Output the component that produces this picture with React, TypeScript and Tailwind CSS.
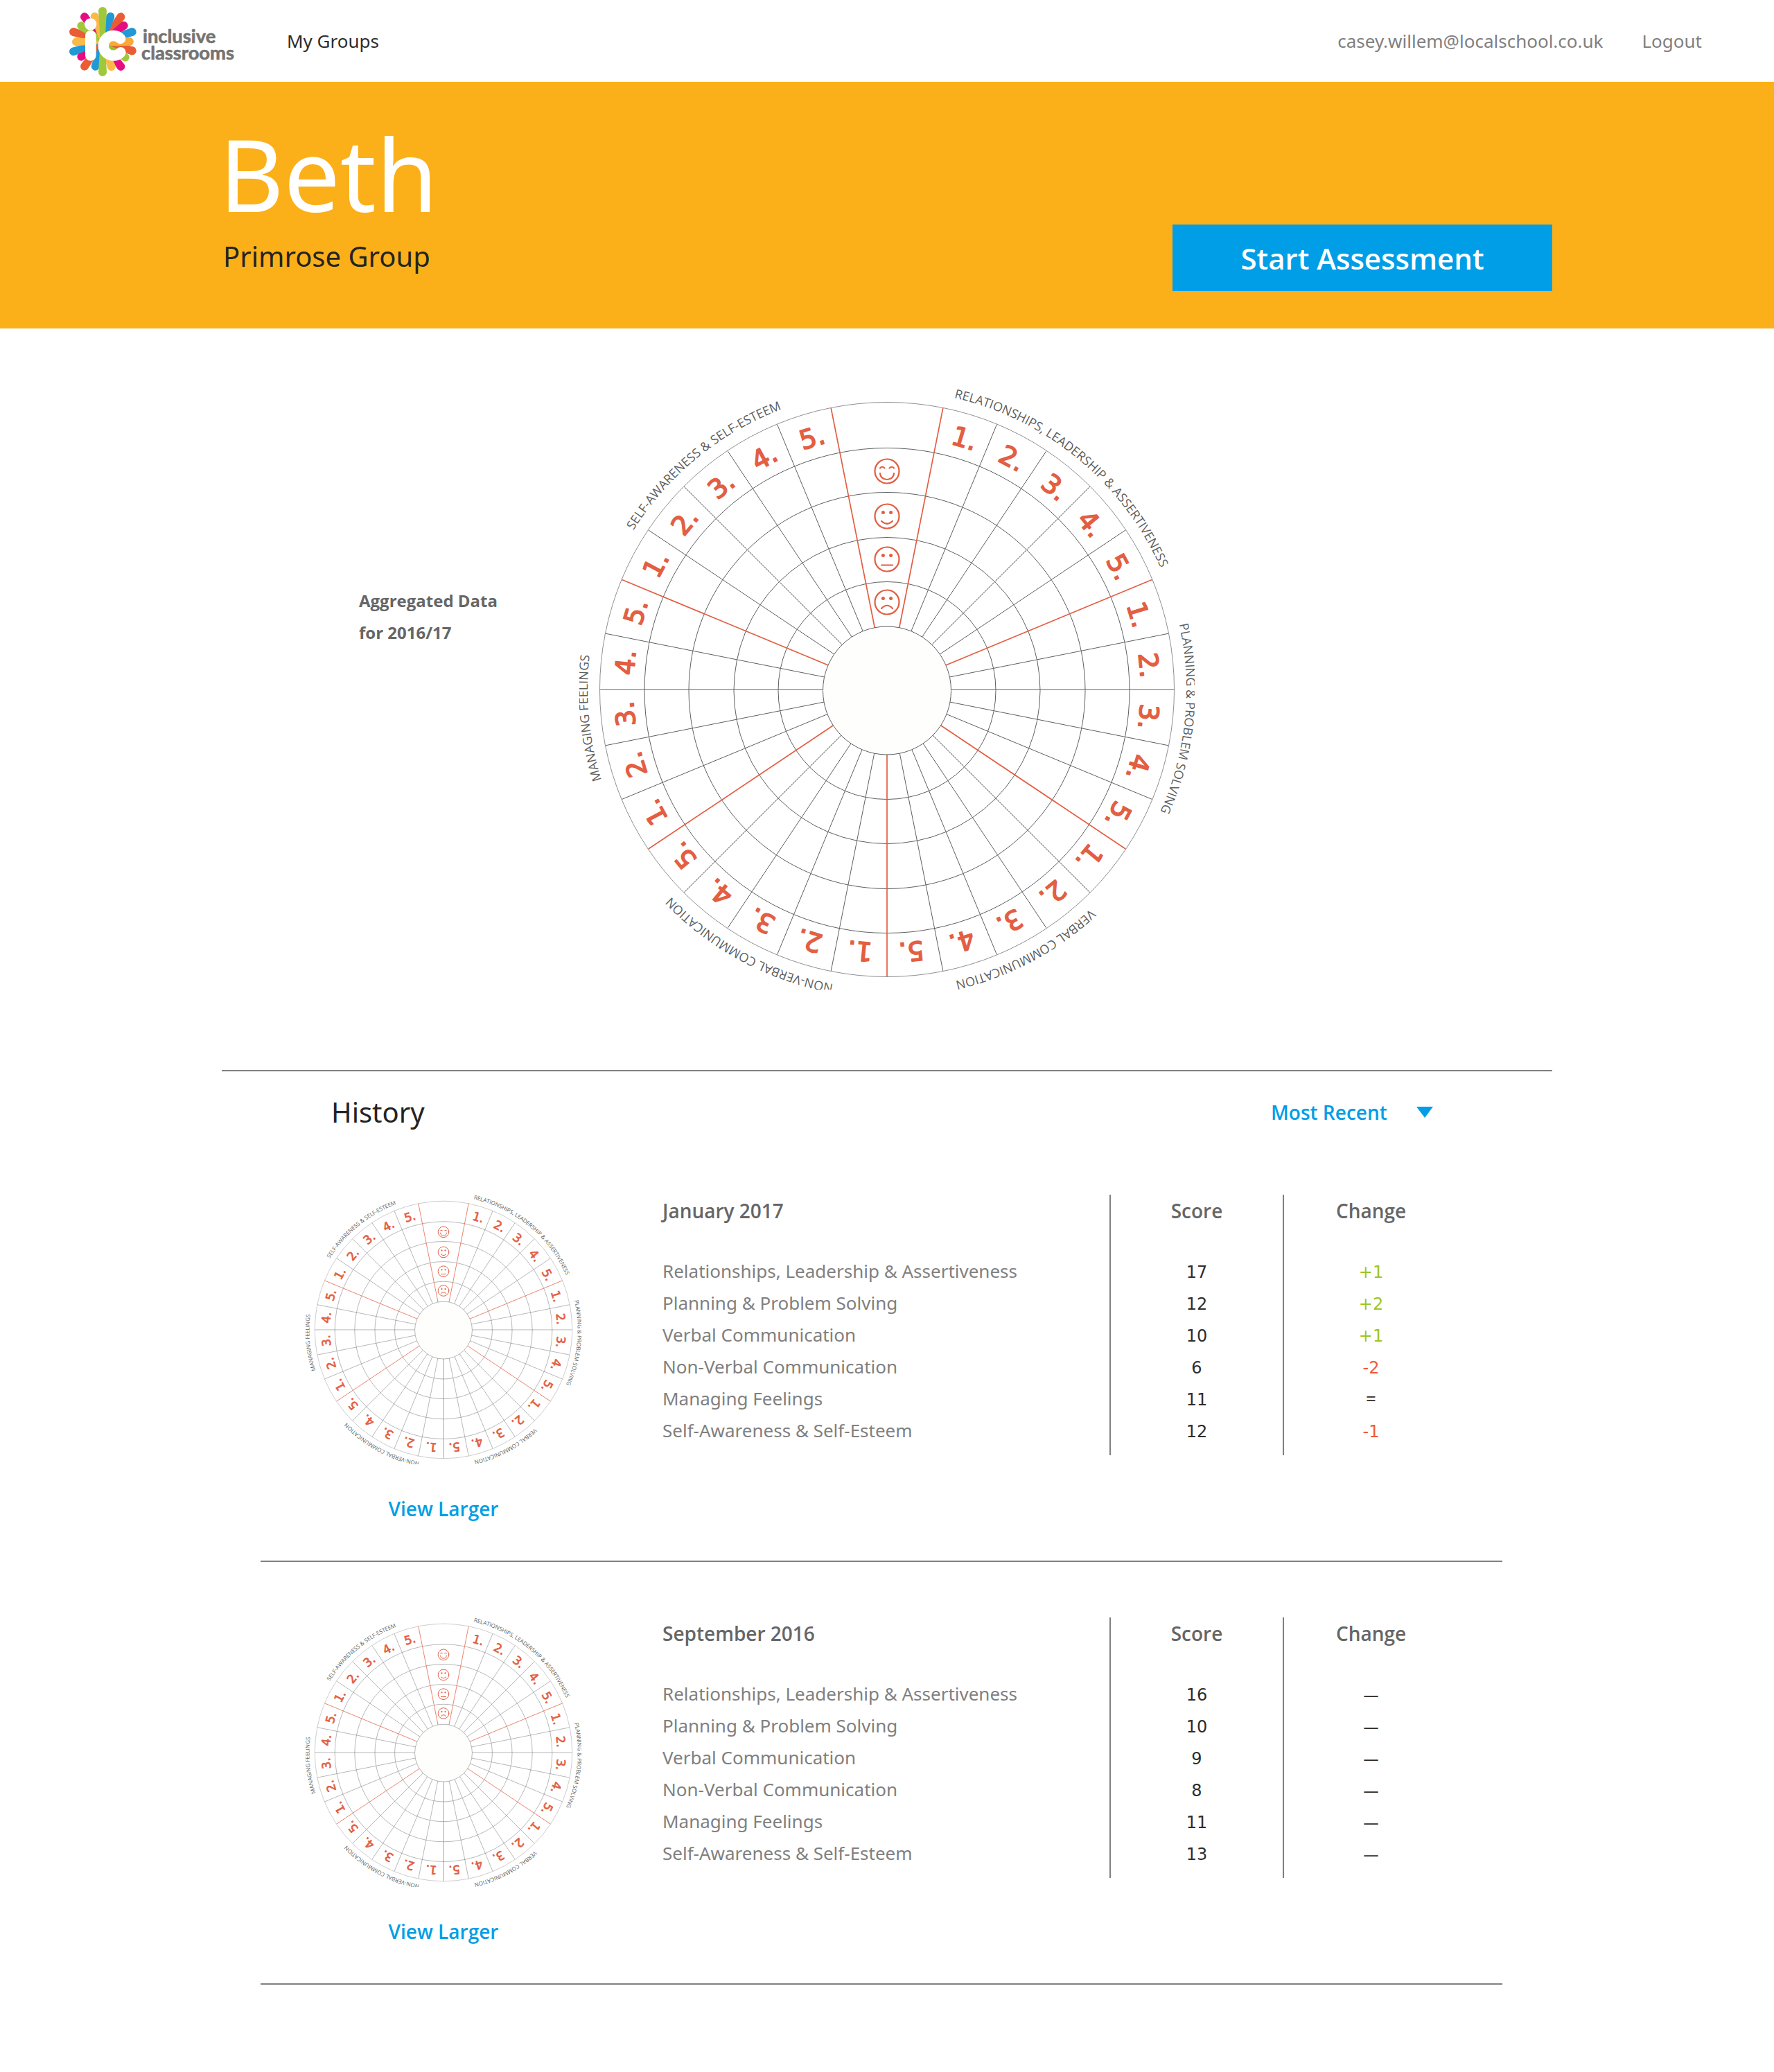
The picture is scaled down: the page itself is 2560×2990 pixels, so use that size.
import React from 'react';

const SKILLS = [
  'Relationships, Leadership & Assertiveness',
  'Planning & Problem Solving',
  'Verbal Communication',
  'Non-Verbal Communication',
  'Managing Feelings',
  'Self-Awareness & Self-Esteem',
];

const HISTORY = [
  {
    date: 'January 2017',
    scores: [17, 12, 10, 6, 11, 12],
    changes: ['+1', '+2', '+1', '-2', '=', '-1'],
  },
  {
    date: 'September 2016',
    scores: [16, 10, 9, 8, 11, 13],
    changes: ['—', '—', '—', '—', '—', '—'],
  },
];

const INK = '#5d5f61';
const RED = '#e35e42';

const polar = (r: number, deg: number) => {
  const a = (deg * Math.PI) / 180;
  return { x: r * Math.sin(a), y: -r * Math.cos(a) };
};

/* Petals of the logo: tip x, tip y, colour. */
const PETALS: [number, number, string][] = [
  [78, 61, '#e60d80'],
  [64, 233, '#e60d80'],
  [254, 236, '#9fc93a'],
  [30, 211, '#2199d6'],
  [30, 126, '#ea5c34'],
  [42, 169, '#fbb94a'],
  [64, 100, '#9fc93a'],
  [122, 60, '#fbb94a'],
  [235, 61, '#ea5c34'],
  [248, 99, '#e60d80'],
  [190, 60, '#2199d6'],
  [284, 126, '#2199d6'],
  [272, 168, '#fbb94a'],
  [284, 208, '#ea5c34'],
  [235, 276, '#e60d80'],
  [194, 276, '#fbb94a'],
  [78, 275, '#ea5c34'],
  [125, 275, '#2199d6'],
  [156, 36, '#9fc93a'],
  [156, 300, '#9fc93a'],
];

function Petal({ x, y, fill }: { x: number; y: number; fill: string }) {
  const cx = 156;
  const cy = 168;
  const len = Math.hypot(x - cx, y - cy);
  const nx = -(y - cy) / len;
  const ny = (x - cx) / len;
  const w = 18;
  const b = 10;
  return (
    <path
      fill={fill}
      d={`M${cx + nx * b} ${cy + ny * b}L${x + nx * w} ${y + ny * w}A${w} ${w} 0 0 0 ${x - nx * w} ${y - ny * w}L${cx - nx * b} ${cy - ny * b}Z`}
    />
  );
}

function Logo() {
  return (
    <svg viewBox="0 0 732 330" className="h-[110px] w-[244px]" role="img" aria-label="inclusive classrooms">
      {PETALS.map(([x, y, c]) => (
        <Petal key={`${x}-${y}`} x={x} y={y} fill={c} />
      ))}
      <circle cx="205" cy="190" r="26" fill="#9dbf2c" />
      <path d="M156 160L272 150A18 18 0 0 1 272 186L182 186Z" fill="#f8a93c" />
      <path d="M190 186L284 190A18 18 0 0 1 280 226Z" fill="#ea5c34" />
      <circle cx="104" cy="93" r="26" fill="#fff" />
      <rect x="81" y="120" width="47" height="131" rx="23" fill="#fff" />
      <path d="M233 155A43 43 0 1 0 234 215" fill="none" stroke="#fff" strokeWidth="46" strokeLinecap="round" />
      <g
        fill="#757472"
        stroke="#757472"
        strokeWidth="2"
        strokeLinejoin="round"
        className="font-['Lato'] text-[82px] font-bold"
      >
        <text x="330" y="174">inclusive</text>
        <text x="324" y="246">classrooms</text>
      </g>
    </svg>
  );
}

function Face({ y, mood }: { y: number; mood: 'joy' | 'happy' | 'neutral' | 'sad' }) {
  const mouth = {
    joy: 'M-10 3A10 9 0 0 0 10 3',
    happy: 'M-8 7Q0 14.500 8 7',
    neutral: 'M-8 8.500H8',
    sad: 'M-8 9Q0 0.500 8 9',
  }[mood];
  return (
    <g transform={`translate(0 ${y})`} fill="none" stroke={RED} strokeWidth="2.200" strokeLinecap="round">
      <circle r="17.500" />
      <path d={mouth} />
      {mood === 'joy' ? (
        <path d="M-10 -4.500Q-7 -8 -3.500 -4.500M3.500 -4.500Q7 -8 10 -4.500" />
      ) : (
        <g fill={RED} stroke="none">
          <circle cx="-5.600" cy="-5.400" r="2.500" />
          <circle cx="5.600" cy="-5.400" r="2.500" />
        </g>
      )}
    </g>
  );
}

function Wheel({ id, className }: { id: string; className: string }) {
  const spokes = Array.from({ length: 31 }, (_, i) => 11.25 * (i + 1));
  const isRed = (i: number) => i % 5 === 0;
  const R = 432;
  return (
    <svg viewBox="0 0 888 868" className={className} role="img" aria-label="Assessment wheel">
      <defs>
        <path id={id} d={`M0 ${-R}A${R} ${R} 0 0 1 0 ${R}A${R} ${R} 0 0 1 0 ${-R}`} />
      </defs>
      <g transform="translate(444 435)">
        <circle r="414.500" fill="none" stroke={INK} strokeWidth="0.700" />
        {[350, 286, 221, 157].map((r) => (
          <circle key={r} cy="1.500" r={r} fill="none" stroke={INK} strokeWidth="1" />
        ))}
        {[false, true].map((red) =>
          spokes.map((deg, i) => {
            if (isRed(i) !== red) return null;
            const a = polar(91, deg);
            const b = polar(414, deg);
            return (
              <line
                key={deg}
                x1={a.x}
                y1={a.y}
                x2={b.x}
                y2={b.y}
                stroke={red ? RED : INK}
                strokeWidth={red ? 1.7 : 1}
              />
            );
          }),
        )}
        <circle cy="1.500" r="92.500" fill="#fefefc" stroke={INK} strokeWidth="1" />
        <g
          fill={RED}
          stroke={RED}
          strokeWidth="1.600"
          strokeLinejoin="round"
          textAnchor="middle"
          className="font-['DejaVu_Sans'] text-[38px]"
        >
          {Array.from({ length: 30 }, (_, i) => (
            <text key={i} transform={`rotate(${11.25 * (i + 1.5)})`} x="2" y="-366">
              {(i % 5) + 1}.
            </text>
          ))}
        </g>
        <Face y={-315} mood="joy" />
        <Face y={-250} mood="happy" />
        <Face y={-188} mood="neutral" />
        <Face y={-126} mood="sad" />
        <g fill={INK} textAnchor="middle" className="font-['Open_Sans'] text-[18px]">
          {SKILLS.map((s, i) => (
            <text key={s}>
              <textPath href={`#${id}`} startOffset={`${((39.5 + 56.25 * i) / 360) * 100}%`}>
                {s.toUpperCase()}
              </textPath>
            </text>
          ))}
        </g>
      </g>
    </svg>
  );
}

function changeColor(change: string) {
  if (change.startsWith('+')) return "font-['DejaVu_Sans'] text-[24px] leading-[42px] text-[#9bc621]";
  if (change.startsWith('-')) return "font-['DejaVu_Sans'] text-[24px] leading-[42px] text-[#ee5a38]";
  if (change === '—') return 'text-[22px] leading-[42px] text-[#2d2d2d]';
  return 'text-[#2d2d2d]';
}

export default function App() {
  return (
    <div className="min-h-screen bg-white font-['Noto_Sans',sans-serif] text-[26px] leading-[46px] text-[#808080]">
      <header className="flex h-[118px] items-center pl-24 pr-[104px]">
        <a href="#home">
          <Logo />
        </a>
        <nav className="ml-[74px] flex-1">
          <a href="#groups" className="text-[#2d2d2d]">
            My Groups
          </a>
        </nav>
        <div className="flex gap-14">
          <a href="#account">casey.willem@localschool.co.uk</a>
          <a href="#logout">Logout</a>
        </div>
      </header>

      <section className="bg-[#fbb01a] pb-[54px] pt-[60px]">
        <div className="mx-auto flex w-3/4 items-end justify-between">
          <div className="pb-[26px] pl-0.5">
            <h1 className="-ml-1.5 text-[144px] leading-[144px] text-white">Beth</h1>
            <p className="mt-6 text-[40px] leading-[48px] text-[#242424]">Primrose Group</p>
          </div>
          <button
            type="button"
            className="h-24 w-[548px] bg-[#009ee6] pt-0.5 font-['Open_Sans',sans-serif] text-[42px] font-semibold text-white"
          >
            Start Assessment
          </button>
        </div>
      </section>

      <main className="mx-auto w-3/4">
        <section className="grid grid-cols-[1fr_auto_1fr] pb-[116px] pt-[86px]">
          <p className="pl-[198px] pt-[284px] font-['Open_Sans',sans-serif] text-[24px] font-bold text-[#666]">
            Aggregated Data
            <br />
            for 2016/17
          </p>
          <Wheel id="wheel-main" className="h-[868px] w-[888px]" />
        </section>

        <section className="border-t-2 border-[#808080] pl-14 pr-18">
          <div className="flex items-center justify-between pb-[15px] pl-[102px] pr-25 pt-[35px]">
            <h2 className="text-[40px] leading-[48px] text-[#242424]">History</h2>
            <div className="relative flex items-center font-['Open_Sans',sans-serif] text-[28px] font-semibold text-[#009ee6]">
              <select aria-label="Sort history" className="h-[46px] w-[234px] appearance-none bg-transparent">
                <option>Most Recent</option>
                <option>Oldest</option>
              </select>
              <svg viewBox="0 0 24 16" className="pointer-events-none absolute right-0 h-4 w-6" fill="#009ee6">
                <path d="M0 0H24L12 16Z" />
              </svg>
            </div>
          </div>

          {HISTORY.map((entry, n) => (
            <article key={entry.date} className="flex items-start border-b-2 border-[#808080] pb-[52px] pl-[65px] pr-16 pt-20">
              <div className="flex flex-col items-center gap-[41px]">
                <Wheel id={`wheel-${n}`} className="h-[389px] w-[398px]" />
                <a href="#larger" className="font-['Open_Sans',sans-serif] text-[28px] font-semibold text-[#009ee6]">
                  View Larger
                </a>
              </div>
              <table className="ml-[117px] flex-1 table-fixed border-collapse">
                <thead>
                  <tr className="font-['Open_Sans',sans-serif] text-[28px] text-[#666]">
                    <th className="pb-[41px] text-left font-semibold">{entry.date}</th>
                    <th className="w-[250px] border-l-2 border-[#808080] pb-[41px] font-semibold">Score</th>
                    <th className="w-[252px] border-l-2 border-[#808080] pb-[41px] font-semibold">Change</th>
                  </tr>
                </thead>
                <tbody>
                  {SKILLS.map((skill, i) => (
                    <tr key={skill} className="h-[46px] align-baseline last:h-[59px]">
                      <td>{skill}</td>
                      <td className="border-l-2 border-[#808080] text-center font-['DejaVu_Sans'] text-[24px] leading-[42px] text-[#2d2d2d]">
                        {entry.scores[i]}
                      </td>
                      <td className="border-l-2 border-[#808080] text-center">
                        <span className={changeColor(entry.changes[i])}>{entry.changes[i]}</span>
                      </td>
                    </tr>
                  ))}
                </tbody>
              </table>
            </article>
          ))}
        </section>
      </main>
    </div>
  );
}
